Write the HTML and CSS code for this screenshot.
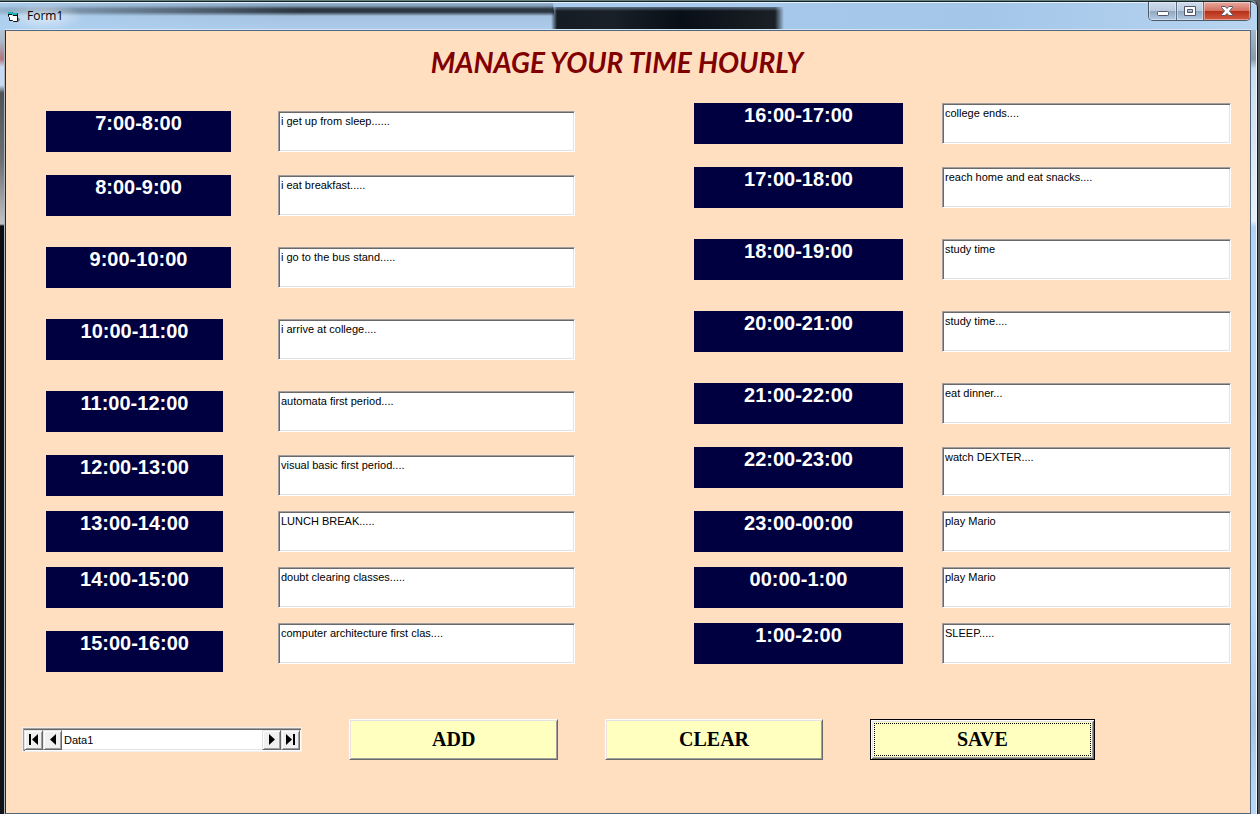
FILE: index.html
```html
<!DOCTYPE html>
<html lang="en">
<head>
<meta charset="utf-8">
<title>Form1</title>
<link rel="stylesheet" href="styles.css">
</head>
<body>
<div class="window">
  <header class="titlebar">
    <svg class="app-icon" width="14" height="12" viewBox="0 0 14 12" aria-hidden="true">
      <path d="M11 7h1l1 2-2 2z" fill="#777"/>
      <path d="M1.500 1.500h4l1 1h4v8h-4l-1-1h-3v-3l-1-1z" fill="#fff" stroke="#111"/>
      <path d="M1 1h4l2 1h3v2H6L5 3H1z" fill="#19b5b5"/>
      <path d="M1 3.500h4l1 1h4" fill="none" stroke="#111"/>
    </svg>
    <span class="caption">Form1</span>
    <div class="controls">
      <button class="control minimize" aria-label="Minimize"><svg width="14" height="16" viewBox="0 0 14 16"><rect x="1.500" y="9.500" width="11" height="4" rx="1" fill="#fff" stroke="#535666"/></svg></button>
      <button class="control maximize" aria-label="Maximize"><svg width="14" height="16" viewBox="0 0 14 16"><path d="M1.500 4.500h11v9h-11zM4.500 7.500v3h5v-3z" fill="#fff" fill-rule="evenodd" stroke="#535666"/></svg></button>
      <button class="control close" aria-label="Close"><svg width="14" height="16" viewBox="0 0 14 16"><path d="M1.500 4.500H5l2 2 2-2h3.500v1L9.500 9l3 3.500v1H9l-2-2-2 2H1.500v-1L4.500 9l-3-3.500z" fill="#fff" stroke="#535666"/></svg></button>
    </div>
  </header>
  <main class="form">
    <h1 class="heading">MANAGE YOUR TIME HOURLY</h1>
    <div class="schedule">
      <div class="hours morning">
        <label class="hour" for="h7">7:00-8:00</label><textarea class="entry" id="h7">i get up from sleep......</textarea>
        <label class="hour" for="h8">8:00-9:00</label><textarea class="entry" id="h8">i eat breakfast.....</textarea>
        <label class="hour" for="h9">9:00-10:00</label><textarea class="entry" id="h9">i go to the bus stand.....</textarea>
        <label class="hour narrow" for="h10">10:00-11:00</label><textarea class="entry" id="h10">i arrive at college....</textarea>
        <label class="hour narrow" for="h11">11:00-12:00</label><textarea class="entry" id="h11">automata first period....</textarea>
        <label class="hour narrow" for="h12">12:00-13:00</label><textarea class="entry" id="h12">visual basic first period....</textarea>
        <label class="hour narrow" for="h13">13:00-14:00</label><textarea class="entry" id="h13">LUNCH BREAK.....</textarea>
        <label class="hour narrow" for="h14">14:00-15:00</label><textarea class="entry" id="h14">doubt clearing classes.....</textarea>
        <label class="hour narrow lowered" for="h15">15:00-16:00</label><textarea class="entry" id="h15">computer architecture first clas....</textarea>
      </div>
      <div class="hours evening">
        <label class="hour" for="h16">16:00-17:00</label><textarea class="entry" id="h16">college ends....</textarea>
        <label class="hour" for="h17">17:00-18:00</label><textarea class="entry" id="h17">reach home and eat snacks....</textarea>
        <label class="hour" for="h18">18:00-19:00</label><textarea class="entry" id="h18">study time</textarea>
        <label class="hour" for="h20">20:00-21:00</label><textarea class="entry" id="h20">study time....</textarea>
        <label class="hour" for="h21">21:00-22:00</label><textarea class="entry" id="h21">eat dinner...</textarea>
        <label class="hour" for="h22">22:00-23:00</label><textarea class="entry tall" id="h22">watch DEXTER....</textarea>
        <label class="hour" for="h23">23:00-00:00</label><textarea class="entry" id="h23">play Mario</textarea>
        <label class="hour" for="h0">00:00-1:00</label><textarea class="entry" id="h0">play Mario</textarea>
        <label class="hour" for="h1">1:00-2:00</label><textarea class="entry" id="h1">SLEEP.....</textarea>
      </div>
    </div>
    <div class="actions">
      <div class="data">
        <button class="step" aria-label="First record"><svg width="10" height="12" viewBox="0 0 10 12"><path d="M0 0h2v11H0zM9 0v11L3 5.500z"/></svg></button>
        <button class="step" aria-label="Previous record"><svg width="10" height="12" viewBox="0 0 10 12"><path d="M8 0v11L2 5.500z"/></svg></button>
        <span class="data-name">Data1</span>
        <button class="step" aria-label="Next record"><svg width="10" height="12" viewBox="0 0 10 12"><path d="M2 0v11l6-5.500z"/></svg></button>
        <button class="step" aria-label="Last record"><svg width="10" height="12" viewBox="0 0 10 12"><path d="M0 0v11l6-5.500zM7 0h2v11H7z"/></svg></button>
      </div>
      <button class="action add">ADD</button>
      <button class="action clear">CLEAR</button>
      <button class="action save">SAVE</button>
    </div>
  </main>
</div>
</body>
</html>
```
FILE: styles.css
```css
* {
  box-sizing: border-box;
}

body {
  margin: 0;
  background: #555a5c;
  color: #000;
  font-family: "Liberation Sans", Arial, sans-serif;
}

button {
  margin: 0;
  padding: 0;
  font: inherit;
}

svg {
  display: block;
  flex: none;
}

.window {
  display: flex;
  flex-direction: column;
  min-height: 100vh;
  margin-right: 2px;
  padding: 0 6px 0 5px;
  border-top: 1px solid #66827f;
  border-right: 1px solid #111820;
  border-radius: 0 7px 0 0;
  background:
    linear-gradient(#eef5fc, #eef5fc) right / 1px 100% no-repeat,
    linear-gradient(#bdd6f0 0, #8b9aab 58px, #c9ddf2 68px, #e6f0fb 220px, #b0d3f7 226px, #b5d8fb 600px, #a6c6e8 720px, #b8d9fa) right / 8px 100% no-repeat,
    linear-gradient(#c8dcf3 0, #a9bacb 40px, #b3747f 58px, #c5dbf5 66px, #c5dbf5 84px, #4d5357 92px, #6c7072 160px, #c2c3c4 223px, #0b0e12 225px, #101318) left / 5px 100% no-repeat,
    #a9caec;
}

.titlebar {
  display: flex;
  align-items: flex-start;
  flex: none;
  height: 29px;
  margin: 0 -6px 0 -5px;
  padding: 0 6px 0 7px;
  border-top: 1px solid #16202a;
  border-radius: 0 7px 0 0;
  box-shadow: inset 0 1px #e6f2fb;
  background:
    radial-gradient(ellipse at center, #ffffff90, #ffffff00 70%) 4px 1px / 80px 28px no-repeat,
    linear-gradient(#a9caec, #a9caec00) 553px 1px / 231px 8px no-repeat,
    linear-gradient(90deg, #1b202600 0, #161c23 6px, #1a2027 60px, #090f17 130px, #1b2026 224px, #1b202600) 551px 5px / 233px 24px no-repeat,
    linear-gradient(90deg, #b0d2f2cc, #b0d2f200 300px) 0 0 / 554px 29px no-repeat,
    linear-gradient(#9fc0de 0, #7f9ab4 4px, #2c3640 7px, #2c3640 10px, #a4c2e0 14px, #aecdee) 0 0 / 554px 29px no-repeat,
    linear-gradient(90deg, #b0d2f2, #a3c6e9 980px, #b8d4f0);
}

.app-icon {
  margin-top: 9px;
}

.caption {
  margin: 6px auto 0 6px;
  font: 12px/16px "Open Sans", sans-serif;
}

.controls {
  display: flex;
  height: 19px;
  border: 1px solid #4c5967;
  border-top: 0;
  border-radius: 0 0 5px 5px;
  overflow: hidden;
}

.control {
  display: flex;
  justify-content: center;
  width: 28px;
  border: 0;
  border-right: 1px solid #627182;
  background: linear-gradient(#d0dceb, #b9cadd 50%, #91a8c1 52%, #b2cae4);
  box-shadow: inset 0 0 0 1px #ffffff66;
}

.maximize {
  width: 27px;
}

.close {
  width: 46px;
  border-right: 0;
  background: linear-gradient(#e8aaa0, #d5705f 48%, #b5301b 52%, #d45b3e);
}

.form {
  flex: 1;
  padding: 0 19px 32px 40px;
  border: 1px solid #53677c;
  border-left-color: #222830;
  box-shadow: 0 -1px #d5e6f7, -1px 0 #aeb4ba;
  background: #ffdfc0;
}

.heading {
  margin: 11px 43px 0 0;
  color: #800000;
  font: italic 700 28px/40px Lato, "Open Sans", sans-serif;
  text-align: center;
}

.schedule {
  display: grid;
  grid-template-columns: 529fr 537fr;
  gap: 119px;
  margin-top: 21px;
}

.hours {
  display: grid;
  align-items: start;
}

.morning {
  grid-template: 64px 72px 72px 72px 64px 56px 56px 56px 49px / 185fr 297fr;
  column-gap: 47px;
  margin-top: 8px;
}

.evening {
  grid-template: 64px 72px 72px 72px 64px 64px 56px 56px 41px / 209fr 289fr;
  column-gap: 39px;
}

.hour {
  height: 41px;
  background: #000040;
  color: #fff;
  font-size: 20px;
  font-weight: 700;
  line-height: 25px;
  text-align: center;
}

.narrow {
  margin-right: 8px;
}

.lowered {
  margin-top: 8px;
}

.entry {
  display: block;
  width: 100%;
  height: 41px;
  margin: 0;
  padding: 3px 2px;
  border: 1px solid;
  border-color: #a0a0a0 #fff #fff #a0a0a0;
  box-shadow: inset 1px 1px #696969, inset -1px -1px #e3e3e3;
  border-radius: 0;
  outline: 0;
  background: #fff;
  color: #000;
  font: 11px/13px "Liberation Sans", Arial, sans-serif;
  resize: none;
  overflow: hidden;
}

.tall {
  height: 49px;
}

.actions {
  display: flex;
  gap: 47px;
  margin: 47px 136px 0 -24px;
}

.data {
  display: flex;
  flex: 0 1 280px;
  height: 25px;
  margin-top: 8px;
  padding: 1px;
  border: 1px solid #f0f0f0;
  box-shadow: inset 1px 1px #a0a0a0, inset 2px 2px #696969;
  background: #fff;
}

.data-name {
  flex: 1;
  padding-left: 2px;
  border-top: 1px solid #696969;
  border-bottom: 1px solid #e3e3e3;
  font-size: 11px;
  line-height: 20px;
}

.step {
  display: flex;
  align-items: center;
  justify-content: center;
  width: 19px;
  margin-top: 1px;
  border: 1px solid;
  border-color: #e3e3e3 #696969 #696969 #e3e3e3;
  box-shadow: inset 1px 1px #fff, inset -1px -1px #a0a0a0;
  background: #f0f0f0;
}

.action {
  height: 41px;
  border: 1px solid;
  border-color: #fff #696969 #696969 #fff;
  box-shadow: inset 1px 1px #e3e3e3, inset -1px -1px #a0a0a0;
  background: #ffffc0;
  color: #000;
  font: 700 20px/37px "Liberation Serif", "Times New Roman", serif;
}

.add {
  flex: 209 1 0;
}

.clear {
  flex: 217 1 0;
}

.save {
  flex: 225 1 0;
  border-color: #000;
  box-shadow: inset 1px 1px #fff, inset -1px -1px #696969, inset 2px 2px #e3e3e3, inset -2px -2px #a0a0a0;
  outline: 1px dotted #000;
  outline-offset: -5px;
}
```
